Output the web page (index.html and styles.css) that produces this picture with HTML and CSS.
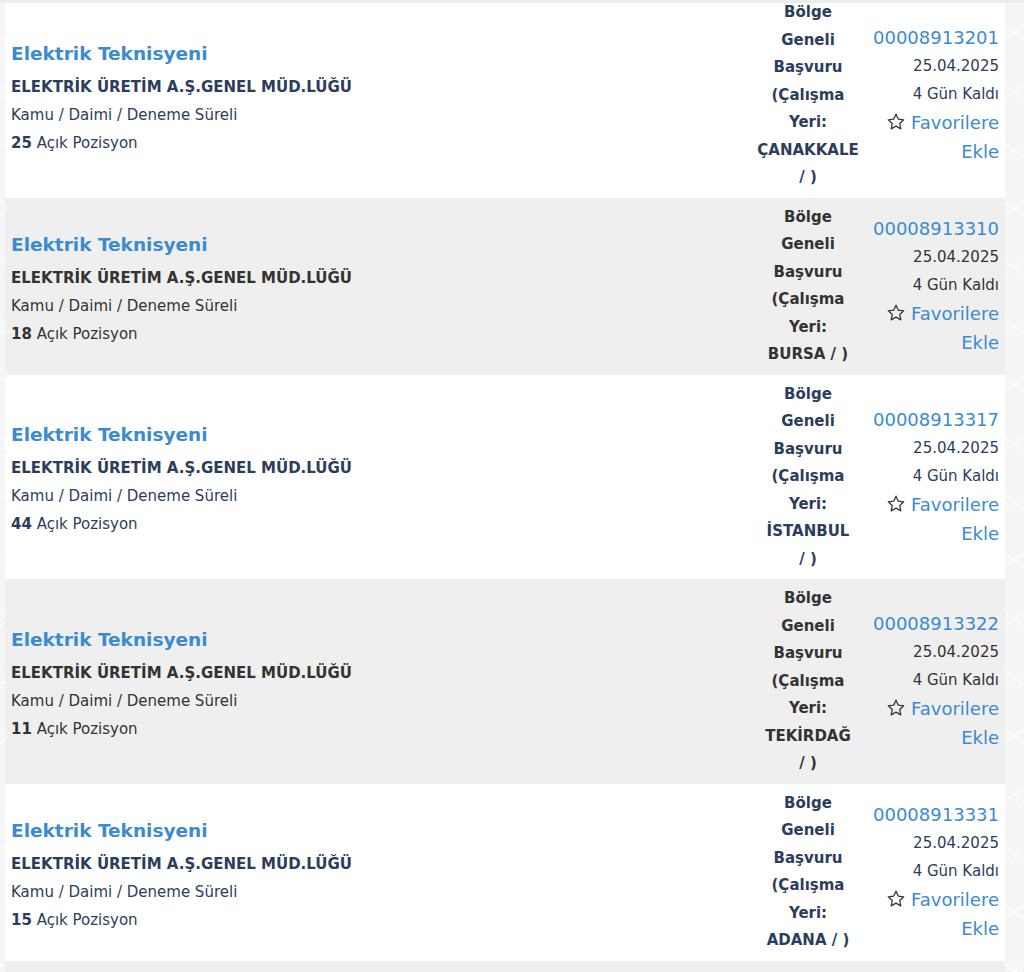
FILE: index.html
```html
<!DOCTYPE html>
<html lang="tr">
<head>
<meta charset="utf-8">
<title>İlanlar</title>
<link rel="stylesheet" href="styles.css">
</head>
<body>
<div class="topedge"></div>
<div class="list">
  <div class="row">
    <div class="main">
      <a class="title" href="#">Elektrik Teknisyeni</a>
      <div class="org">ELEKTRİK ÜRETİM A.Ş.GENEL MÜD.LÜĞÜ</div>
      <div class="meta">Kamu / Daimi / Deneme Süreli</div>
      <div class="meta"><b>25</b> Açık Pozisyon</div>
    </div>
    <div class="place">Bölge Geneli Başvuru (Çalışma Yeri: <span class="loc">ÇANAKKALE /&nbsp;)</span></div>
    <div class="side">
      <a class="code" href="#">00008913201</a>
      <div class="date">25.04.2025</div>
      <div class="date">4 Gün Kaldı</div>
      <a class="fav" href="#"><svg class="star" viewBox="0 0 24 24" width="18" height="18"><path d="M12 1.6l3.1 6.6 7.2.85-5.3 4.95 1.4 7.1L12 17.55l-6.4 3.55 1.4-7.1-5.3-4.95 7.2-.85z" fill="none" stroke="currentColor" stroke-width="1.7" stroke-linejoin="round"/></svg> Favorilere Ekle</a>
    </div>
  </div>
  <div class="row alt">
    <div class="main">
      <a class="title" href="#">Elektrik Teknisyeni</a>
      <div class="org">ELEKTRİK ÜRETİM A.Ş.GENEL MÜD.LÜĞÜ</div>
      <div class="meta">Kamu / Daimi / Deneme Süreli</div>
      <div class="meta"><b>18</b> Açık Pozisyon</div>
    </div>
    <div class="place">Bölge Geneli Başvuru (Çalışma Yeri: <span class="loc">BURSA /&nbsp;)</span></div>
    <div class="side">
      <a class="code" href="#">00008913310</a>
      <div class="date">25.04.2025</div>
      <div class="date">4 Gün Kaldı</div>
      <a class="fav" href="#"><svg class="star" viewBox="0 0 24 24" width="18" height="18"><path d="M12 1.6l3.1 6.6 7.2.85-5.3 4.95 1.4 7.1L12 17.55l-6.4 3.55 1.4-7.1-5.3-4.95 7.2-.85z" fill="none" stroke="currentColor" stroke-width="1.7" stroke-linejoin="round"/></svg> Favorilere Ekle</a>
    </div>
  </div>
  <div class="row">
    <div class="main">
      <a class="title" href="#">Elektrik Teknisyeni</a>
      <div class="org">ELEKTRİK ÜRETİM A.Ş.GENEL MÜD.LÜĞÜ</div>
      <div class="meta">Kamu / Daimi / Deneme Süreli</div>
      <div class="meta"><b>44</b> Açık Pozisyon</div>
    </div>
    <div class="place">Bölge Geneli Başvuru (Çalışma Yeri: <span class="loc">İSTANBUL /&nbsp;)</span></div>
    <div class="side">
      <a class="code" href="#">00008913317</a>
      <div class="date">25.04.2025</div>
      <div class="date">4 Gün Kaldı</div>
      <a class="fav" href="#"><svg class="star" viewBox="0 0 24 24" width="18" height="18"><path d="M12 1.6l3.1 6.6 7.2.85-5.3 4.95 1.4 7.1L12 17.55l-6.4 3.55 1.4-7.1-5.3-4.95 7.2-.85z" fill="none" stroke="currentColor" stroke-width="1.7" stroke-linejoin="round"/></svg> Favorilere Ekle</a>
    </div>
  </div>
  <div class="row alt">
    <div class="main">
      <a class="title" href="#">Elektrik Teknisyeni</a>
      <div class="org">ELEKTRİK ÜRETİM A.Ş.GENEL MÜD.LÜĞÜ</div>
      <div class="meta">Kamu / Daimi / Deneme Süreli</div>
      <div class="meta"><b>11</b> Açık Pozisyon</div>
    </div>
    <div class="place">Bölge Geneli Başvuru (Çalışma Yeri: <span class="loc">TEKİRDAĞ /&nbsp;)</span></div>
    <div class="side">
      <a class="code" href="#">00008913322</a>
      <div class="date">25.04.2025</div>
      <div class="date">4 Gün Kaldı</div>
      <a class="fav" href="#"><svg class="star" viewBox="0 0 24 24" width="18" height="18"><path d="M12 1.6l3.1 6.6 7.2.85-5.3 4.95 1.4 7.1L12 17.55l-6.4 3.55 1.4-7.1-5.3-4.95 7.2-.85z" fill="none" stroke="currentColor" stroke-width="1.7" stroke-linejoin="round"/></svg> Favorilere Ekle</a>
    </div>
  </div>
  <div class="row">
    <div class="main">
      <a class="title" href="#">Elektrik Teknisyeni</a>
      <div class="org">ELEKTRİK ÜRETİM A.Ş.GENEL MÜD.LÜĞÜ</div>
      <div class="meta">Kamu / Daimi / Deneme Süreli</div>
      <div class="meta"><b>15</b> Açık Pozisyon</div>
    </div>
    <div class="place">Bölge Geneli Başvuru (Çalışma Yeri: <span class="loc">ADANA /&nbsp;)</span></div>
    <div class="side">
      <a class="code" href="#">00008913331</a>
      <div class="date">25.04.2025</div>
      <div class="date">4 Gün Kaldı</div>
      <a class="fav" href="#"><svg class="star" viewBox="0 0 24 24" width="18" height="18"><path d="M12 1.6l3.1 6.6 7.2.85-5.3 4.95 1.4 7.1L12 17.55l-6.4 3.55 1.4-7.1-5.3-4.95 7.2-.85z" fill="none" stroke="currentColor" stroke-width="1.7" stroke-linejoin="round"/></svg> Favorilere Ekle</a>
    </div>
  </div>
  <div class="row alt tail"></div>
</div>
</body>
</html>
```
FILE: styles.css
```css
html, body {
  margin: 0;
  padding: 0;
}
body {
  font-family: "DejaVu Sans", Verdana, sans-serif;
  color: #2c3d5c;
  background-color: #f5f5f5;
  background-image:
    repeating-linear-gradient(35deg, rgba(255,255,255,0) 0 46px, rgba(255,255,255,0.6) 46px 48px),
    repeating-linear-gradient(-35deg, rgba(255,255,255,0) 0 46px, rgba(255,255,255,0.6) 46px 48px);
  overflow: hidden;
}
.topedge {
  position: fixed;
  top: 0;
  left: 0;
  right: 0;
  height: 3px;
  background: #ededed;
  z-index: 2;
}
.list {
  margin: -7px 19px 0 5px;
}
.row {
  display: grid;
  grid-template-columns: 1fr 114px 140px;
  background: #ffffff;
  color: #2c3d5c;
}
.row.alt {
  background: #efefef;
  color: #333333;
}
.row.tail {
  height: 60px;
}
.main, .place, .side {
  padding: 6px 6px;
  align-self: center;
}
.main {
  display: flex;
  flex-direction: column;
  align-items: flex-start;
}
.title {
  color: #3a8bd1;
  font-weight: bold;
  font-size: 18.5px;
  line-height: 30px;
  margin-top: 5px;
  margin-bottom: 4px;
  text-decoration: none;
}
.org {
  font-weight: bold;
  font-size: 15px;
  line-height: 28px;
}
.meta {
  font-size: 15px;
  line-height: 28px;
}
.meta b {
  font-weight: bold;
}
.place {
  font-weight: bold;
  font-size: 15px;
  line-height: 27.5px;
  text-align: center;
}
.loc {
  display: block;
}
.side {
  display: flex;
  flex-direction: column;
  align-items: flex-end;
  text-align: right;
}
.code {
  color: #3a8bd1;
  font-size: 18px;
  line-height: 28px;
  text-decoration: none;
}
.date {
  font-size: 15px;
  line-height: 28px;
}
.fav {
  color: #3a8bd1;
  font-size: 18px;
  line-height: 29px;
  text-decoration: none;
}
.star {
  color: #333333;
  vertical-align: -2px;
}
```
